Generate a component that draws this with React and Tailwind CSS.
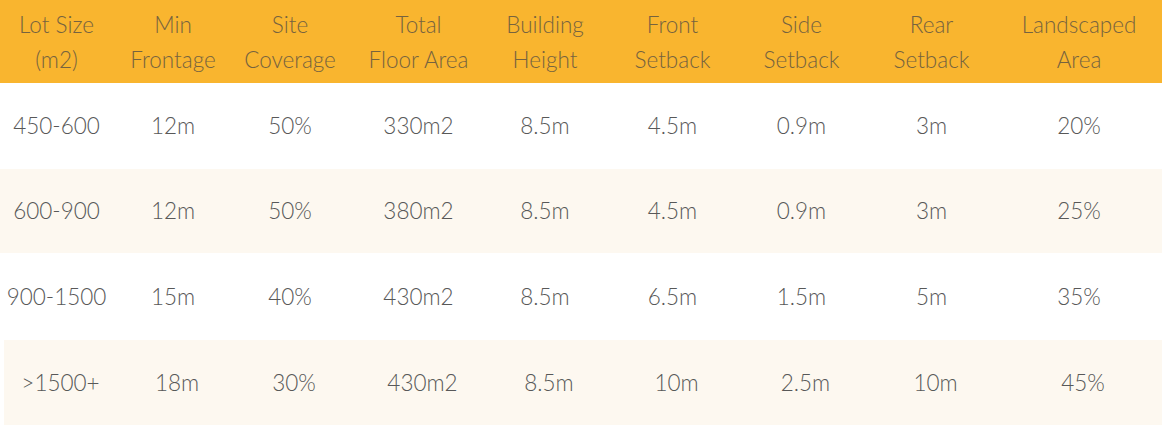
import React from 'react';

const COLS = 'grid grid-cols-[113px_120px_122px_127px_126px_129px_129px_139px_157px]';
const ADJ = ['', '', 'pr-2', '', '', '', '', 'pr-2', 'pr-[9px]'];

const HEADERS = [
    ['Lot Size', '(m2)'],
    ['Min', 'Frontage'],
    ['Site', 'Coverage'],
    ['Total', 'Floor Area'],
    ['Building', 'Height'],
    ['Front', 'Setback'],
    ['Side', 'Setback'],
    ['Rear', 'Setback'],
    ['Landscaped', 'Area'],
];

const ROWS = [
    { cells: ['450-600', '12m', '50%', '330m2', '8.5m', '4.5m', '0.9m', '3m', '20%'], bg: 'bg-white', h: 'h-[86px]' },
    { cells: ['600-900', '12m', '50%', '380m2', '8.5m', '4.5m', '0.9m', '3m', '25%'], bg: 'bg-[#fdf8f0]', h: 'h-[84px]' },
    { cells: ['900-1500', '15m', '40%', '430m2', '8.5m', '6.5m', '1.5m', '5m', '35%'], bg: 'bg-white', h: 'h-[87px]' },
    { cells: ['>1500+', '18m', '30%', '430m2', '8.5m', '10m', '2.5m', '10m', '45%'], bg: 'bg-[#fdf8f0] ml-1', h: 'h-[85px]' },
];

export default function App() {
    return (
        <div className="w-[1162px] h-[425px] bg-white overflow-hidden font-['Lato',sans-serif] font-light">
            {/* header band */}
            <div className={`${COLS} h-[83px] bg-[#f9b52f] items-center text-[22.5px] leading-[35px] text-[#76633f]`}>
                {HEADERS.map((lines, i) => (
                    <div key={i} className={`flex flex-col items-center whitespace-nowrap ${ADJ[i]}`}>
                        <span>{lines[0]}</span>
                        <span>{lines[1]}</span>
                    </div>
                ))}
            </div>

            {ROWS.map((row, r) => (
                <div key={r} className={`${COLS} ${row.bg} ${row.h} items-center text-[22.5px] text-[#585858]`}>
                    {row.cells.map((c, i) => (
                        <div key={i} className={`flex justify-center whitespace-nowrap ${ADJ[i]}`}>{c}</div>
                    ))}
                </div>
            ))}
        </div>
    );
}
